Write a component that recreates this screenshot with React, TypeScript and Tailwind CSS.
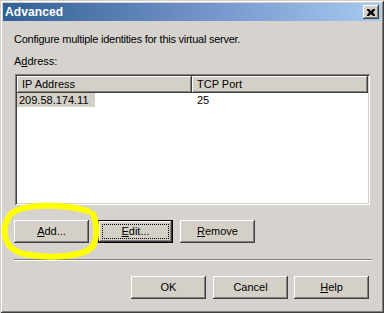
const raised =
  "shadow-[inset_-1px_-1px_#404040,inset_1px_1px_#ffffff,inset_-2px_-2px_#808080,inset_2px_2px_#d4d0c8]";

function Btn({
  children,
  focused,
  className,
}: {
  children: React.ReactNode;
  focused?: boolean;
  className?: string;
}) {
  if (focused) {
    return (
      <div className={`h-[23px] w-[75px] border border-black bg-[#d4d0c8] ${className ?? ""}`}>
        <div className={`flex h-full w-full items-center justify-center p-[3px] ${raised}`}>
          <div className="flex h-full w-full items-center justify-center border border-dotted border-black text-[11px] text-black">
            {children}
          </div>
        </div>
      </div>
    );
  }
  return (
    <div
      className={`flex h-[23px] w-[75px] items-center justify-center bg-[#d4d0c8] text-[11px] text-black ${raised} ${className ?? ""}`}
    >
      {children}
    </div>
  );
}

export default function App() {
  return (
    <div
      className="relative h-[313px] w-[384px] overflow-hidden bg-[#d6d3ce] p-[3px] shadow-[inset_1px_1px_#d4d0c8,inset_-1px_-1px_#404040,inset_2px_2px_#ffffff,inset_-2px_-2px_#808080]"
      style={{ fontFamily: '"Liberation Sans", Arial, sans-serif' }}
    >
      {/* title bar */}
      <div className="flex h-[18px] items-center justify-between bg-gradient-to-r from-[#2f6196] via-[#7090c8] to-[#a6caf0] pl-[2px] pr-[2px]">
        <span className="text-[12px] font-bold tracking-[0.1px] text-white">Advanced</span>
        <div className={`flex h-[14px] w-[16px] items-center justify-center bg-[#d4d0c8] ${raised}`}>
          <svg width="8" height="7" viewBox="0 0 8 7">
            <path d="M0 0h2l2 2 2-2h2v1L6 3.5 8 6v1H6L4 5 2 7H0V6l2-2.5L0 1z" fill="#000" />
          </svg>
        </div>
      </div>

      <div className="px-[11px] text-[11px] text-black">
        <p className="mt-[12px] h-[13px] leading-[13px] tracking-[-0.25px]">
          Configure multiple identities for this virtual server.
        </p>
        <p className="mt-[9px] h-[13px] leading-[13px]">
          A<span className="underline">d</span>dress:
        </p>

        {/* list view */}
        <div className="ml-[1px] mt-[6px] h-[131px] w-[355px] bg-white p-[2px] shadow-[inset_1px_1px_#808080,inset_-1px_-1px_#ffffff,inset_2px_2px_#404040,inset_-2px_-2px_#d4d0c8]">
          <div className="flex h-[17px]">
            <div className={`flex w-[175px] items-center bg-[#d4d0c8] pl-[5px] ${raised}`}>IP Address</div>
            <div className={`flex flex-1 items-center bg-[#d4d0c8] pl-[5px] ${raised}`}>TCP Port</div>
          </div>
          <div className="flex h-[14px] items-center">
            <div className="w-[175px]">
              <span className="inline-block w-[78px] bg-[#d4d0c8] pl-[2px] leading-[14px]">209.58.174.11</span>
            </div>
            <span className="pl-[5px]">25</span>
          </div>
        </div>

        {/* action buttons */}
        <div className="mt-[15px] flex">
          <Btn>
            <span className="underline">A</span>dd...
          </Btn>
          <Btn focused className="ml-[9px]">
            <span className="underline">E</span>dit...
          </Btn>
          <Btn className="ml-[7px]">
            <span className="underline">R</span>emove
          </Btn>
        </div>

        <div className="mt-[16px] h-[2px] w-[358px] border-t border-b border-t-[#808080] border-b-white" />

        <div className="mt-[15px] flex justify-end pr-[1px]">
          <Btn>OK</Btn>
          <Btn className="ml-[7px]">Cancel</Btn>
          <Btn className="ml-[6px]">
            <span className="underline">H</span>elp
          </Btn>
        </div>
      </div>

      {/* yellow annotation around Add */}
      <svg className="absolute left-0 top-0" width="384" height="313">
        <path
          d="M88 211 C60 203 22 204 11 214 C1 226 1 248 24 254 C50 259 84 257 93 246 C98 236 97 223 93 214"
          fill="none"
          stroke="#ffff00"
          strokeWidth="6"
          strokeLinecap="round"
        />
      </svg>
    </div>
  );
}
